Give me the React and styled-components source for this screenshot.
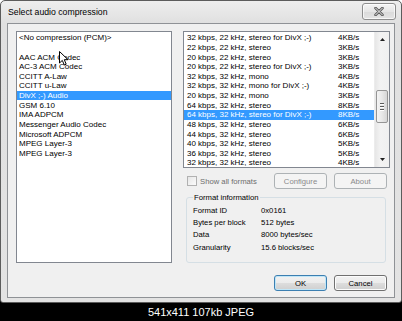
import styled, { createGlobalStyle } from 'styled-components';

const GlobalStyle = createGlobalStyle`
  html, body {
    margin: 0;
    padding: 0;
    background: #000;
  }
  body {
    font-family: "Liberation Sans", Arial, sans-serif;
  }
`;

const Screen = styled.div`
  position: relative;
  width: 402px;
  height: 321px;
  display: flex;
  flex-direction: column;
  overflow: hidden;
  background: linear-gradient(#fff 0 50%, #000 50%);
`;

const Window = styled.div`
  box-sizing: border-box;
  height: 303px;
  display: flex;
  flex-direction: column;
  padding: 0 6px 4px 6px;
  border: 1px solid #5c5c5c;
  border-radius: 5px 5px 3px 3px;
  background: linear-gradient(#eeeeee, #e0e0e0 22px, #e3e3e3);
`;

const TitleBar = styled.div`
  height: 22px;
  display: flex;
  align-items: flex-start;
  justify-content: space-between;
`;

const Title = styled.span`
  margin: 6px 0 0 1px;
  font-size: 8.7px;
  color: #000;
`;

const CloseButton = styled.div`
  box-sizing: border-box;
  width: 34px;
  height: 17px;
  margin: 2px -1px 0 0;
  display: flex;
  align-items: center;
  justify-content: center;
  border: 1px solid #8d8d8d;
  border-radius: 3px;
  background: linear-gradient(#f4f4f4, #e6e6e6 50%, #dadada 51%, #e4e4e4);
  box-shadow: inset 0 0 0 1px rgba(255, 255, 255, 0.7);
`;

const Client = styled.div`
  flex: 1;
  display: flex;
  gap: 11px;
  padding: 7px 4px 0 8px;
  border: 1px solid #8f9296;
  background: #f0f0f0;
`;

const ListBox = styled.div`
  box-sizing: border-box;
  width: ${(p) => p.$width}px;
  height: ${(p) => p.$height}px;
  display: flex;
  border: 1px solid #828790;
  background: #fff;
  overflow: hidden;
`;

const Rows = styled.div`
  flex: 1;
  padding-top: 1px;
  overflow: hidden;
`;

const Row = styled.div`
  height: 9.64px;
  display: flex;
  align-items: center;
  padding-left: ${(p) => p.$indent}px;
  font-size: 8px;
  white-space: nowrap;
  color: ${(p) => (p.$selected ? '#fff' : '#000')};
  background: ${(p) => (p.$selected ? '#3399ff' : 'transparent')};
`;

const NameCell = styled.span`
  width: 151px;
`;

const ScrollBar = styled.div`
  width: 14px;
  display: flex;
  flex-direction: column;
  align-items: center;
  background: linear-gradient(90deg, #e6e6e6, #f3f3f3 40%, #f0f0f0);
  border-left: 1px solid #ececec;
`;

const ArrowButton = styled.div`
  height: 15px;
  display: flex;
  align-items: center;
  justify-content: center;
`;

const Track = styled.div`
  flex: 1;
  align-self: stretch;
  display: flex;
  flex-direction: column;
  align-items: center;
  padding-top: 43px;
`;

const Thumb = styled.div`
  box-sizing: border-box;
  width: 12px;
  height: 33px;
  display: flex;
  flex-direction: column;
  align-items: center;
  justify-content: center;
  gap: 1px;
  border: 1px solid #959595;
  border-radius: 2px;
  background: linear-gradient(90deg, #f4f4f4, #e8e8e8 50%, #d6d6d6);
`;

const Grip = styled.span`
  width: 4px;
  height: 1px;
  background: #5a5a5a;
  border-bottom: 1px solid #fff;
`;

const RightColumn = styled.div`
  width: 207px;
  display: flex;
  flex-direction: column;
`;

const OptionsRow = styled.div`
  display: flex;
  align-items: center;
  margin-top: 5px;
  padding: 0 3px 0 4px;
`;

const CheckLabel = styled.label`
  flex: 1;
  display: flex;
  align-items: center;
  gap: 3px;
  font-size: 7.7px;
  color: #6d6d6d;
`;

const CheckBox = styled.span`
  box-sizing: border-box;
  width: 10px;
  height: 10px;
  border: 1px solid #b1b1b1;
  background: linear-gradient(135deg, #e6e6e6, #fbfbfb);
`;

const ButtonGroup = styled.div`
  display: flex;
  gap: 7px;
`;

const Button = styled.div`
  box-sizing: border-box;
  width: 53px;
  height: 16px;
  display: flex;
  align-items: center;
  justify-content: center;
  font-size: 7.7px;
  border-radius: 3px;
  color: ${(p) => (p.$disabled ? '#8a8a8a' : '#000')};
  border: 1px solid ${(p) => (p.$disabled ? '#adb2b5' : p.$default ? '#3c7fb1' : '#707070')};
  background: ${(p) =>
    p.$disabled
      ? '#f4f4f4'
      : 'linear-gradient(#f2f2f2, #ebebeb 50%, #dddddd 51%, #cfcfcf)'};
  box-shadow: ${(p) =>
    p.$default ? 'inset 0 0 0 1px #bfe6f8' : p.$disabled ? 'none' : 'inset 0 0 0 1px #fcfcfc'};
`;

const GroupBox = styled.fieldset`
  margin: 4px 4px 0 3px;
  padding: 2px 5px 9px 6px;
  border: 1px solid #d5dfe5;
  border-radius: 3px;
`;

const Legend = styled.legend`
  padding: 0 1px;
  font-size: 7.7px;
  color: #000;
`;

const InfoRow = styled.div`
  height: 12.3px;
  display: flex;
  align-items: center;
  font-size: 7.7px;
  color: #000;
`;

const InfoLabel = styled.span`
  width: 68px;
`;

const BottomRow = styled.div`
  display: flex;
  justify-content: flex-end;
  margin-top: 12px;
  padding-right: 3px;
`;

const Caption = styled.div`
  flex: 1;
  display: flex;
  align-items: center;
  justify-content: center;
  color: #fff;
  font-size: 11px;
`;

const Cursor = styled.svg`
  position: absolute;
  left: 59px;
  top: 51px;
`;

const codecs = [
  '<No compression (PCM)>',
  '',
  'AAC ACM Codec',
  'AC-3 ACM Codec',
  'CCITT A-Law',
  'CCITT u-Law',
  'DivX ;-) Audio',
  'GSM 6.10',
  'IMA ADPCM',
  'Messenger Audio Codec',
  'Microsoft ADPCM',
  'MPEG Layer-3',
  'MPEG Layer-3',
];

const formats = [
  ['32 kbps, 22 kHz, stereo for DivX ;-)', '4KB/s'],
  ['22 kbps, 22 kHz, stereo', '3KB/s'],
  ['20 kbps, 22 kHz, stereo', '3KB/s'],
  ['20 kbps, 22 kHz, stereo for DivX ;-)', '3KB/s'],
  ['32 kbps, 32 kHz, mono', '4KB/s'],
  ['32 kbps, 32 kHz, mono for DivX ;-)', '4KB/s'],
  ['20 kbps, 32 kHz, mono', '3KB/s'],
  ['64 kbps, 32 kHz, stereo', '8KB/s'],
  ['64 kbps, 32 kHz, stereo for DivX ;-)', '8KB/s'],
  ['48 kbps, 32 kHz, stereo', '6KB/s'],
  ['44 kbps, 32 kHz, stereo', '6KB/s'],
  ['40 kbps, 32 kHz, stereo', '5KB/s'],
  ['36 kbps, 32 kHz, stereo', '5KB/s'],
  ['32 kbps, 32 kHz, stereo', '4KB/s'],
];

const info = [
  ['Format ID', '0x0161'],
  ['Bytes per block', '512 bytes'],
  ['Data', '8000 bytes/sec'],
  ['Granularity', '15.6 blocks/sec'],
];

export default function App() {
  return (
    <Screen>
      <GlobalStyle />
      <Window>
        <TitleBar>
          <Title>Select audio compression</Title>
          <CloseButton>
            <svg width='10' height='9' viewBox='0 0 10 9'>
              <path d='M1.5 1 L8.5 8 M8.5 1 L1.5 8' stroke='#5a5a5a' strokeWidth='2.6' strokeLinecap='round' />
              <path d='M1.5 1 L8.5 8 M8.5 1 L1.5 8' stroke='#eeeeee' strokeWidth='1' strokeLinecap='round' />
            </svg>
          </CloseButton>
        </TitleBar>
        <Client>
          <ListBox $width={156} $height={232}>
            <Rows>
              {codecs.map((name, i) => (
                <Row key={i} $indent={2} $selected={i === 6}>
                  {name}
                </Row>
              ))}
            </Rows>
          </ListBox>
          <RightColumn>
            <ListBox $width={207} $height={137}>
              <Rows>
                {formats.map(([name, rate], i) => (
                  <Row key={i} $indent={3} $selected={i === 8}>
                    <NameCell>{name}</NameCell>
                    <span>{rate}</span>
                  </Row>
                ))}
              </Rows>
              <ScrollBar>
                <ArrowButton>
                  <svg width='5' height='3' viewBox='0 0 5 3'>
                    <path d='M0 3 L2.5 0 L5 3 Z' fill='#222' />
                  </svg>
                </ArrowButton>
                <Track>
                  <Thumb>
                    <Grip />
                    <Grip />
                    <Grip />
                  </Thumb>
                </Track>
                <ArrowButton>
                  <svg width='5' height='3' viewBox='0 0 5 3'>
                    <path d='M0 0 L5 0 L2.5 3 Z' fill='#222' />
                  </svg>
                </ArrowButton>
              </ScrollBar>
            </ListBox>
            <OptionsRow>
              <CheckLabel>
                <CheckBox />
                Show all formats
              </CheckLabel>
              <ButtonGroup>
                <Button $disabled>Configure</Button>
                <Button $disabled>About</Button>
              </ButtonGroup>
            </OptionsRow>
            <GroupBox>
              <Legend>Format information</Legend>
              {info.map(([label, value]) => (
                <InfoRow key={label}>
                  <InfoLabel>{label}</InfoLabel>
                  <span>{value}</span>
                </InfoRow>
              ))}
            </GroupBox>
            <BottomRow>
              <ButtonGroup>
                <Button $default>OK</Button>
                <Button>Cancel</Button>
              </ButtonGroup>
            </BottomRow>
          </RightColumn>
        </Client>
      </Window>
      <Caption>541x411 107kb JPEG</Caption>
      <Cursor width='10' height='15' viewBox='0 0 10 15'>
        <path d='M0.5 0.5 L0.5 12 L3.3 9.4 L5.3 14 L7.2 13.2 L5.3 8.7 L9 8.7 Z' fill='#fff' stroke='#000' strokeWidth='1' strokeLinejoin='round' />
      </Cursor>
    </Screen>
  );
}
